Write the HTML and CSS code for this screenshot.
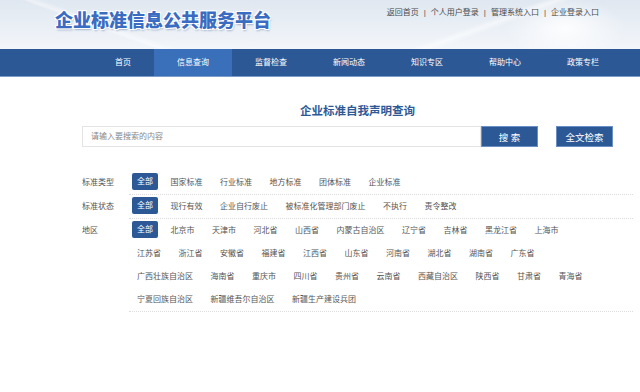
FILE: index.html
```html
<!DOCTYPE html>
<html lang="zh-CN">
  <head>
    <meta charset="utf-8">
    <title>企业标准信息公共服务平台</title>
    <link rel="stylesheet" href="styles.css">
  </head>
  <body>
    <header id="page-header">
      <h1 id="site-title">企业标准信息公共服务平台</h1>
      <ul id="top-links">
        <li><a href="#">返回首页</a></li>
        <li class="sep">|</li>
        <li><a href="#">个人用户登录</a></li>
        <li class="sep">|</li>
        <li><a href="#">管理系统入口</a></li>
        <li class="sep">|</li>
        <li><a href="#">企业登录入口</a></li>
      </ul>
    </header>
    <nav id="main-nav">
      <a href="#" class="nav-item first">首页</a>
      <a href="#" class="nav-item active">信息查询</a>
      <a href="#" class="nav-item">监督检查</a>
      <a href="#" class="nav-item">新闻动态</a>
      <a href="#" class="nav-item">知识专区</a>
      <a href="#" class="nav-item">帮助中心</a>
      <a href="#" class="nav-item">政策专栏</a>
    </nav>
    <main id="page-main">
      <h2 id="query-title">企业标准自我声明查询</h2>
      <div class="search-row">
        <input class="search-input" type="text" placeholder="请输入要搜索的内容">
        <button class="btn">搜 索</button>
        <button class="btn btn-full">全文检索</button>
      </div>
      <div class="filters">
        <div class="filter-row">
          <div class="filter-label">标准类型</div>
          <div class="filter-values">
            <span class="opt selected">全部</span><span class="opt">国家标准</span><span class="opt">行业标准</span><span class="opt">地方标准</span><span class="opt">团体标准</span><span class="opt">企业标准</span>
          </div>
        </div>
        <div class="filter-row">
          <div class="filter-label">标准状态</div>
          <div class="filter-values">
            <span class="opt selected">全部</span><span class="opt">现行有效</span><span class="opt">企业自行废止</span><span class="opt">被标准化管理部门废止</span><span class="opt">不执行</span><span class="opt">责令整改</span>
          </div>
        </div>
        <div class="filter-row">
          <div class="filter-label">地区</div>
          <div class="filter-values">
            <span class="opt selected">全部</span><span class="opt">北京市</span><span class="opt">天津市</span><span class="opt">河北省</span><span class="opt">山西省</span><span class="opt">内蒙古自治区</span><span class="opt">辽宁省</span><span class="opt">吉林省</span><span class="opt">黑龙江省</span><span class="opt">上海市</span><span class="opt">江苏省</span><span class="opt">浙江省</span><span class="opt">安徽省</span><span class="opt">福建省</span><span class="opt">江西省</span><span class="opt">山东省</span><span class="opt">河南省</span><span class="opt">湖北省</span><span class="opt">湖南省</span><span class="opt">广东省</span><span class="opt">广西壮族自治区</span><span class="opt">海南省</span><span class="opt">重庆市</span><span class="opt">四川省</span><span class="opt">贵州省</span><span class="opt">云南省</span><span class="opt">西藏自治区</span><span class="opt">陕西省</span><span class="opt">甘肃省</span><span class="opt">青海省</span><span class="opt">宁夏回族自治区</span><span class="opt">新疆维吾尔自治区</span><span class="opt">新疆生产建设兵团</span>
          </div>
        </div>
      </div>
    </main>
  </body>
</html>
```

FILE: styles.css
```css
:root {
  --blue-0: #2c5996;
  --blue-1: #3a6fba;
  --blue-title: #3a6cc2;
  --text-0: #555;
  --line: #dcdcdc;
}
body {
  margin: 0;
  font-family: "Liberation Sans", "Noto Sans CJK SC", sans-serif;
  color: var(--text-0);
  background-color: #fff;
}
a {
  color: inherit;
  text-decoration: none;
}
#page-header {
  display: flex;
  justify-content: space-between;
  height: 49px;
  padding: 0 41px 0 55px;
  background:
    radial-gradient(ellipse 60px 30px at 565px 28px, rgba(255, 255, 255, .9), rgba(255, 255, 255, 0)),
    linear-gradient(160deg, rgba(255, 255, 255, 0) 70%, rgba(255, 255, 255, .5) 72%, rgba(255, 255, 255, 0) 74%),
    linear-gradient(20deg, rgba(255, 255, 255, 0) 20%, rgba(255, 255, 255, .45) 21%, rgba(255, 255, 255, 0) 23%),
    linear-gradient(to bottom, #dfe7f0, #f3f6fa);
}
#site-title {
  margin: 9px 0 0;
  font-family: "Noto Sans CJK SC", sans-serif;
  font-size: 18px;
  font-weight: 900;
  line-height: 20px;
  color: var(--blue-title);
  text-shadow: 1px 1px 0 #fff, -1px -1px 0 #fff, 1px -1px 0 #fff, -1px 1px 0 #fff, 1px 2px 2px rgba(40, 70, 120, .35);
}
#top-links {
  display: flex;
  margin: 7px 0 0;
  padding: 0;
  list-style: none;
  font-size: 8px;
  line-height: 12px;
  color: #4a4a4a;
}
#top-links .sep {
  margin: 0 5px;
}
#main-nav {
  display: flex;
  height: 27px;
  padding-left: 92px;
  background-color: var(--blue-0);
  border-bottom: 1px solid #7d9dcb;
}
.nav-item {
  width: 78px;
  font-size: 8px;
  line-height: 27px;
  text-align: center;
  color: #fff;
}
.nav-item.first {
  width: 62px;
}
.nav-item.active {
  background-color: var(--blue-1);
}
#page-main {
  width: 551px;
  margin-left: 82px;
}
#query-title {
  margin: 25px 0 0;
  font-family: "Noto Sans CJK SC", sans-serif;
  font-size: 11.5px;
  line-height: 16px;
  text-align: center;
  color: #2d5a97;
}
.search-row {
  display: flex;
  margin-top: 8px;
}
.search-input {
  width: 399px;
  height: 21px;
  margin: 0;
  padding: 0 8px;
  box-sizing: border-box;
  border: 1px solid #e4e4e4;
  font-family: inherit;
  font-size: 8px;
  outline: none;
}
.search-input::placeholder {
  color: #888;
}
.btn {
  width: 57px;
  height: 21px;
  margin: 0;
  padding: 0;
  border: 1px solid #6a8fc6;
  background-color: var(--blue-0);
  font-family: inherit;
  font-size: 9.5px;
  color: #fff;
}
.btn-full {
  margin-left: 18px;
}
.filters {
  margin-top: 24px;
}
.filter-row {
  display: flex;
}
.filter-label {
  width: 47px;
  flex: none;
  font-size: 8px;
  line-height: 23px;
}
.filter-values {
  flex: 1;
  padding: 0 35px 0 3px;
  border-bottom: 1px dotted var(--line);
  font-size: 8px;
  line-height: 23px;
}
.opt {
  display: inline-block;
  margin-right: 7.5px;
  padding: 0 5px;
  white-space: nowrap;
}
.opt.selected {
  height: 17px;
  line-height: 17px;
  border-radius: 2px;
  background-color: var(--blue-0);
  color: #fff;
  vertical-align: 1px;
}
```
